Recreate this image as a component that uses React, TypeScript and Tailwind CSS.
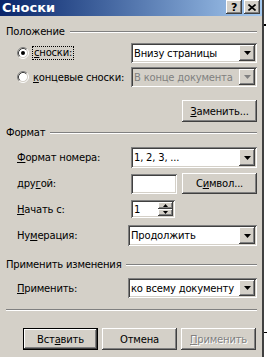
import type { ReactNode } from 'react';

const raised =
  'shadow-[inset_-1px_-1px_0_#404040,inset_1px_1px_0_#ffffff,inset_-2px_-2px_0_#808080,inset_2px_2px_0_#d4d0c8]';
const sunken =
  'shadow-[inset_1px_1px_0_#808080,inset_-1px_-1px_0_#ffffff,inset_2px_2px_0_#404040,inset_-2px_-2px_0_#d4d0c8]';

function Arrow({ disabled = false }: { disabled?: boolean }) {
  return (
    <div className={`flex w-[16px] items-center justify-center self-stretch bg-[#d4d0c8] ${raised}`}>
      <svg width="7" height="4" viewBox="0 0 7 4">
        <path d="M0 0h7L3.5 4z" fill={disabled ? '#808080' : '#000'} />
      </svg>
    </div>
  );
}

function Select({ value, width, disabled = false }: { value: string; width: string; disabled?: boolean }) {
  return (
    <div className={`flex h-full ${width} p-[2px] ${disabled ? 'bg-[#d4d0c8]' : 'bg-white'} ${sunken}`}>
      <div className={`flex flex-1 items-center overflow-hidden whitespace-nowrap pl-[1px] ${disabled ? 'text-[#808080]' : 'text-black'}`}>{value}</div>
      <Arrow disabled={disabled} />
    </div>
  );
}

function Button({ children, width = 'w-[75px]', def = false, disabled = false }: { children: ReactNode; width?: string; def?: boolean; disabled?: boolean }) {
  const inner = (
    <div className={`flex h-full w-full items-center justify-center bg-[#d4d0c8] ${raised} ${disabled ? 'text-[#808080] [text-shadow:1px_1px_0_#fff]' : 'text-black'}`}>
      {children}
    </div>
  );
  if (def) return <div className={`h-full ${width} border border-black`}>{inner}</div>;
  return <div className={`h-full ${width}`}>{inner}</div>;
}

function Radio({ checked }: { checked: boolean }) {
  return (
    <svg width="12" height="12" viewBox="0 0 12 12" className="shrink-0">
      <circle cx="6" cy="6" r="4.5" fill="#fff" />
      <path d="M2.11 9.89A5.5 5.5 0 0 1 9.89 2.11" stroke="#808080" fill="none" />
      <path d="M9.89 2.11A5.5 5.5 0 0 1 2.11 9.89" stroke="#fff" fill="none" />
      <path d="M2.82 9.18A4.5 4.5 0 0 1 9.18 2.82" stroke="#404040" fill="none" />
      <path d="M9.18 2.82A4.5 4.5 0 0 1 2.82 9.18" stroke="#d4d0c8" fill="none" />
      {checked && <circle cx="6" cy="6" r="2" fill="#000" />}
    </svg>
  );
}

function GroupHeader({ title, mt }: { title: string; mt: string }) {
  return (
    <div className={`flex h-[12px] items-center ${mt}`}>
      <span className="pr-[5px] leading-none">{title}</span>
      <div className="flex-1">
        <div className="h-[1px] bg-[#808080]" />
        <div className="h-[1px] bg-white" />
      </div>
    </div>
  );
}

export default function App() {
  return (
    <div className="flex h-[357px] w-[267px] overflow-hidden bg-white font-['DejaVu_Sans',sans-serif] text-[10px] tracking-[-0.2px] text-black">
      <div className="flex w-[262px] flex-col bg-[#d4d0c8]">
        {/* title bar */}
        <div className="flex h-[16px] shrink-0 items-start bg-gradient-to-r from-[#0a246a] to-[#a6caf0] pr-[2px]">
          <span className="pl-[2px] text-[13px] font-bold leading-[15px] tracking-normal text-white">Сноски</span>
          <div className="ml-auto flex gap-[2px]">
            <div className={`flex h-[14px] w-[16px] items-center justify-center bg-[#d4d0c8] text-[11px] font-bold leading-none ${raised}`}>?</div>
            <div className={`flex h-[14px] w-[16px] items-center justify-center bg-[#d4d0c8] ${raised}`}>
              <svg width="8" height="7" viewBox="0 0 8 7">
                <path d="M0.5 0.5l7 6M7.5 0.5l-7 6" stroke="#000" strokeWidth="1.6" />
              </svg>
            </div>
          </div>
        </div>

        <div className="flex flex-col pl-[6px] pr-[5px]">
          <GroupHeader title="Положение" mt="mt-[10px]" />

          <div className="mt-[5px] flex h-[20px] items-center">
            <div className="flex items-center gap-[3px] pl-[11px]">
              <Radio checked />
              <span className="border border-dotted border-black px-[1px] leading-[12px]">
                <u>с</u>носки:
              </span>
            </div>
            <div className="ml-auto h-full">
              <Select value="Внизу страницы" width="w-[126px]" />
            </div>
          </div>

          <div className="mt-[4px] flex h-[20px] items-center">
            <div className="flex items-center gap-[4px] pl-[11px]">
              <Radio checked={false} />
              <span>
                <u>к</u>онцевые сноски:
              </span>
            </div>
            <div className="ml-auto h-full">
              <Select value="В конце документа" width="w-[126px]" disabled />
            </div>
          </div>

          <div className="mt-[13px] flex h-[22px] justify-end">
            <Button>
              <span>
                <u>З</u>аменить...
              </span>
            </Button>
          </div>

          <GroupHeader title="Формат" mt="mt-[5px]" />

          <div className="mt-[8px] flex h-[21px] items-center">
            <span className="pl-[11px]">
              <u>Ф</u>ормат номера:
            </span>
            <div className="ml-auto h-full">
              <Select value="1, 2, 3, ..." width="w-[126px]" />
            </div>
          </div>

          <div className="mt-[5px] flex h-[21px] items-center">
            <span className="pl-[11px]">
              дру<u>г</u>ой:
            </span>
            <div className={`ml-auto h-[20px] w-[46px] bg-white ${sunken}`} />
            <div className="ml-[5px] h-full">
              <Button>
                <span>
                  С<u>и</u>мвол...
                </span>
              </Button>
            </div>
          </div>

          <div className="mt-[6px] flex h-[18px] items-center">
            <span className="w-[120px] pl-[11px]">
              <u>Н</u>ачать с:
            </span>
            <div className={`ml-[5px] flex h-full w-[44px] bg-white p-[2px] ${sunken}`}>
              <div className="flex flex-1 items-center pl-[1px]">1</div>
              <div className="flex w-[15px] flex-col">
                <div className={`flex flex-1 items-center justify-center bg-[#d4d0c8] ${raised}`}>
                  <svg width="5" height="3" viewBox="0 0 5 3">
                    <path d="M2.5 0L5 3H0z" fill="#000" />
                  </svg>
                </div>
                <div className={`flex flex-1 items-center justify-center bg-[#d4d0c8] ${raised}`}>
                  <svg width="5" height="3" viewBox="0 0 5 3">
                    <path d="M0 0h5L2.5 3z" fill="#000" />
                  </svg>
                </div>
              </div>
            </div>
          </div>

          <div className="mt-[7px] flex h-[21px] items-center">
            <span className="pl-[11px]">
              Ну<u>м</u>ерация:
            </span>
            <div className="ml-auto h-full">
              <Select value="Продолжить" width="w-[129px]" />
            </div>
          </div>

          <GroupHeader title="Применить изменения" mt="mt-[13px]" />

          <div className="mt-[7px] flex h-[20px] items-center">
            <span className="pl-[11px]">
              <u>П</u>рименить:
            </span>
            <div className="ml-auto h-full">
              <Select value="ко всему документу" width="w-[129px]" />
            </div>
          </div>

          <div className="mt-[11px]">
            <div className="h-[1px] bg-[#808080]" />
            <div className="h-[1px] bg-white" />
          </div>

          <div className="mt-[17px] flex h-[22px] gap-[4px] pl-[17px]">
            <Button def>
              <span>
                Вст<u>а</u>вить
              </span>
            </Button>
            <Button>Отмена</Button>
            <Button disabled>
              <span>
                <u>П</u>рименить
              </span>
            </Button>
          </div>
        </div>
      </div>
      <div className="w-[2px] bg-[#404040]" />
      <div className="flex flex-1 flex-col justify-between py-[24px]">
        <div className="h-[2px] w-[2px] bg-black" />
        <div className="h-[1px] w-[3px] bg-black" />
      </div>
    </div>
  );
}
